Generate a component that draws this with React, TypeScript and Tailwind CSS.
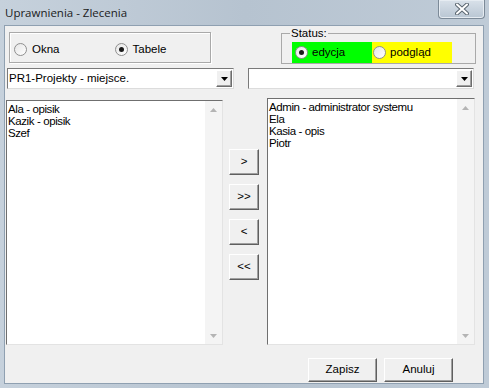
import React from "react";

const font = { fontFamily: '"Liberation Sans", Arial, sans-serif' };

function Radio({ checked }: { checked?: boolean }) {
  return (
    <span className="relative inline-flex h-[13px] w-[13px] shrink-0 items-center justify-center rounded-full border border-[#8f8f8f] bg-gradient-to-br from-[#e6e6e6] to-white">
      {checked && <span className="h-[5px] w-[5px] rounded-full bg-[#1a1a1a]" />}
    </span>
  );
}

function ComboArrow() {
  return (
    <div className="flex h-[17px] w-[16px] items-center justify-center border border-t-white border-l-white border-r-[#6d6d6d] border-b-[#6d6d6d] bg-[#f0f0f0] shadow-[inset_-1px_-1px_0_#a0a0a0]">
      <svg width="7" height="4" viewBox="0 0 7 4">
        <path d="M0 0h7L3.5 4z" fill="#000" />
      </svg>
    </div>
  );
}

function Combo({ text, width }: { text?: string; width: string }) {
  return (
    <div
      className={`flex h-[21px] items-center justify-between border border-t-[#7a7a7a] border-l-[#7a7a7a] border-r-[#dcdcdc] border-b-[#dcdcdc] bg-white pl-[1px] pr-[1px] ${width}`}
    >
      <span className="text-[11.5px] leading-none text-black">{text}</span>
      <ComboArrow />
    </div>
  );
}

function ScrollArrow({ up }: { up?: boolean }) {
  return (
    <div className="flex h-[17px] w-full items-center justify-center">
      <svg width="7" height="4" viewBox="0 0 7 4">
        <path d={up ? "M0 4h7L3.5 0z" : "M0 0h7L3.5 4z"} fill="#b4b4b4" />
      </svg>
    </div>
  );
}

function ListBox({ items, className }: { items: string[]; className: string }) {
  return (
    <div
      className={`flex border border-t-[#6f6f6f] border-l-[#6f6f6f] border-r-[#e3e3e3] border-b-[#e3e3e3] bg-white ${className}`}
    >
      <div className="flex-1 pl-[1px] pt-[2px] text-[11.5px] leading-[12px] tracking-[-0.4px] text-black">
        {items.map((t) => (
          <div key={t}>{t}</div>
        ))}
      </div>
      <div className="flex w-[17px] flex-col justify-between bg-[#f4f4f4]">
        <ScrollArrow up />
        <ScrollArrow />
      </div>
    </div>
  );
}

function Btn({ label, className }: { label: string; className: string }) {
  return (
    <button
      className={`flex items-center justify-center border border-t-white border-l-white border-r-[#5f5f5f] border-b-[#5f5f5f] bg-[#f0f0f0] text-[11.5px] text-black shadow-[inset_-1px_-1px_0_#a0a0a0] ${className}`}
    >
      {label}
    </button>
  );
}

export default function App() {
  return (
    <div
      className="flex h-[388px] w-[489px] flex-col bg-gradient-to-r from-[#c6d1dc] via-[#b6c3d0] to-[#bfcbd7]"
      style={font}
    >
      {/* Title bar */}
      <div className="flex h-[25px] shrink-0 items-start justify-between">
        <span
          className="pl-[5px] pt-[4px] text-[11.5px] text-[#1b1b1b]"
          style={{ fontFamily: '"Open Sans", "Liberation Sans", sans-serif' }}
        >
          Uprawnienia - Zlecenia
        </span>
        <div className="mr-[4px] flex h-[19px] w-[47px] items-center justify-center rounded-b-[4px] border border-t-0 border-[#7c8a98] bg-gradient-to-b from-[#d9e1ea] to-[#b9c6d3] shadow-[inset_0_0_0_1px_#e6ecf2]">
          <svg width="14" height="12" viewBox="0 0 14 12">
            <path d="M2 1.5l10 9M12 1.5l-10 9" stroke="#5a6670" strokeWidth="4" strokeLinecap="round" />
            <path d="M2 1.5l10 9M12 1.5l-10 9" stroke="#fff" strokeWidth="2" strokeLinecap="round" />
          </svg>
        </div>
      </div>

      {/* Client area */}
      <div className="ml-[4px] mr-[5px] mb-[4px] flex flex-1 flex-col border border-[#8fa0b1] bg-[#f0f0f0] text-black">
        {/* Row 1 */}
        <div className="flex items-start pt-[6px]">
          <div className="ml-[4px] flex h-[31px] w-[202px] items-center border border-[#a9a9a9] pt-[4px] shadow-[inset_1px_1px_0_#fff,1px_1px_0_#fff]">
            <div className="ml-[4px] flex items-center gap-[5px] text-[11.5px]">
              <Radio />
              <span>Okna</span>
            </div>
            <div className="ml-[55px] flex items-center gap-[5px] text-[11.5px]">
              <Radio checked />
              <span>Tabele</span>
            </div>
          </div>

          <fieldset className="ml-[70px] mt-[-5px] h-[37px] w-[195px] border border-[#a9a9a9] px-[10px] pb-0">
            <legend className="ml-[-2px] px-[1px] text-[11.5px] leading-[12px]">Status:</legend>
            <div className="mt-[3px] flex h-[21px] w-[160px]">
              <div className="flex w-[80px] items-center gap-[4px] bg-[#00ff00] pl-[3px] text-[11.5px]">
                <Radio checked />
                <span>edycja</span>
              </div>
              <div className="flex w-[80px] items-center gap-[4px] bg-[#ffff00] pl-[1px] text-[11.5px]">
                <Radio />
                <span>podgląd</span>
              </div>
            </div>
          </fieldset>
        </div>

        {/* Row 2 */}
        <div className="mt-[4px] flex">
          <Combo text="PR1-Projekty - miejsce." width="ml-[2px] w-[227px]" />
          <Combo width="ml-[14px] w-[226px]" />
        </div>

        {/* Row 3 */}
        <div className="mt-[9px] flex items-start">
          <ListBox
            items={["Ala - opisik", "Kazik - opisik", "Szef"]}
            className="ml-[1px] mt-[2px] h-[245px] w-[217px]"
          />
          <div className="ml-[6px] mt-[51px] flex w-[30px] flex-col gap-[9px]">
            <Btn label=">" className="h-[26px] w-[30px]" />
            <Btn label=">>" className="h-[26px] w-[30px]" />
            <Btn label="<" className="h-[26px] w-[30px]" />
            <Btn label="<<" className="h-[26px] w-[30px]" />
          </div>
          <ListBox
            items={["Admin - administrator systemu", "Ela", "Kasia - opis", "Piotr"]}
            className="ml-[8px] h-[247px] w-[208px]"
          />
        </div>

        {/* Bottom buttons */}
        <div className="mt-[13px] flex gap-[7px] pl-[303px]">
          <Btn label="Zapisz" className="h-[24px] w-[69px]" />
          <Btn label="Anuluj" className="h-[24px] w-[69px]" />
        </div>
      </div>
    </div>
  );
}
